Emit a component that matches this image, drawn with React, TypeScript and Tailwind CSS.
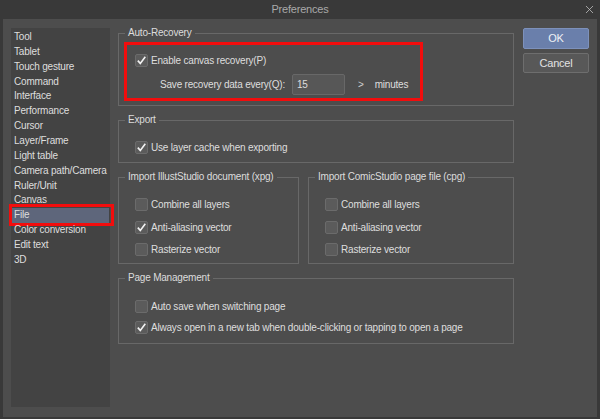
import { X } from "lucide-react";

const categories = [
  "Tool",
  "Tablet",
  "Touch gesture",
  "Command",
  "Interface",
  "Performance",
  "Cursor",
  "Layer/Frame",
  "Light table",
  "Camera path/Camera",
  "Ruler/Unit",
  "Canvas",
  "File",
  "Color conversion",
  "Edit text",
  "3D",
];

function Check({ checked }: { checked?: boolean }) {
  return (
    <span className="w-[13px] h-[13px] shrink-0 rounded-[2px] bg-[#5b5b5b] border border-[#6b6b6b] flex items-center justify-center">
      {checked && (
        <svg width="11" height="11" viewBox="0 0 11 11">
          <path d="M1.8 5.6 L4.3 8.4 L9.3 1.8" fill="none" stroke="#f2f2f2" strokeWidth="1.6" />
        </svg>
      )}
    </span>
  );
}

function Option({ label, checked }: { label: string; checked?: boolean }) {
  return (
    <label className="flex items-center gap-[3px] h-[13px] leading-[13px] whitespace-nowrap">
      <Check checked={checked} />
      <span>{label}</span>
    </label>
  );
}

function Group({
  title,
  className = "",
  children,
}: {
  title: string;
  className?: string;
  children: React.ReactNode;
}) {
  return (
    <fieldset className={`border border-[#686868] ${className}`}>
      <legend className="ml-[6px] px-[3px] leading-[12px] text-[#dcdcdc]">{title}</legend>
      {children}
    </fieldset>
  );
}

export default function App() {
  return (
    <div className="w-[600px] h-[419px] bg-[#393939] flex flex-col font-['Liberation_Sans',sans-serif] text-[10px] tracking-[-0.2px] text-[#dedede] overflow-hidden">
      {/* title bar */}
      <div className="h-[19px] shrink-0 relative flex items-center justify-center text-[#a9a9a9] text-[11px]">
        Preferences
        <X size={13} strokeWidth={1.5} className="absolute right-[4px] top-[3px] text-[#bdbdbd]" />
      </div>

      <div className="flex-1 mx-[3px] mb-[2px] bg-[#4d4d4d] flex items-start pl-[8px] pt-[8px]">
        {/* category list */}
        <div className="mt-[1px] w-[99px] h-[379px] shrink-0 bg-[#434343] pt-[2px]">
          {categories.map((c) => (
            <div
              key={c}
              className={`relative mx-[1px] h-[14.87px] leading-[14.87px] pl-[2px] whitespace-nowrap ${
                c === "File" ? "bg-[#5e667b]" : ""
              }`}
            >
              {c}
              {c === "File" && (
                <span className="absolute -left-[3px] -right-[5px] -top-[4px] -bottom-[3px] border-[3px] border-[#f20d0d]" />
              )}
            </div>
          ))}
        </div>

        {/* settings */}
        <div className="ml-[8px] w-[396px] flex flex-col gap-[8px]">
          <Group title="Auto-Recovery" className="pb-[4px]">
            <div className="mt-[3px] ml-[5px] w-[299px] border-[3px] border-[#f20d0d] pl-[8px] pt-[9px] pb-[3px]">
              <Option label="Enable canvas recovery(P)" checked />
              <div className="mt-[7px] flex items-center h-[21px] whitespace-nowrap">
                <span className="pl-[25px] w-[157px]">Save recovery data every(Q):</span>
                <span className="w-[53px] h-[21px] bg-[#575757] border border-[#686868] rounded-[2px] pl-[4px] leading-[19px]">
                  15
                </span>
                <span className="ml-[13px] text-[#cfcfcf]">&gt;</span>
                <span className="ml-[11px]">minutes</span>
              </div>
            </div>
          </Group>

          <Group title="Export" className="pb-[8px]">
            <div className="pl-[16px] pt-[15px]">
              <Option label="Use layer cache when exporting" checked />
            </div>
          </Group>

          <div className="flex gap-[9px]">
            <Group title="Import IllustStudio document (xpg)" className="w-[181px] pb-[7px]">
              <div className="pl-[16px] pt-[15px] flex flex-col gap-[9.5px]">
                <Option label="Combine all layers" />
                <Option label="Anti-aliasing vector" checked />
                <Option label="Rasterize vector" />
              </div>
            </Group>
            <Group title="Import ComicStudio page file (cpg)" className="flex-1 pb-[7px]">
              <div className="pl-[16px] pt-[15px] flex flex-col gap-[9.5px]">
                <Option label="Combine all layers" />
                <Option label="Anti-aliasing vector" />
                <Option label="Rasterize vector" />
              </div>
            </Group>
          </div>

          <Group title="Page Management" className="pb-[9px]">
            <div className="pl-[16px] pt-[16px] flex flex-col gap-[8px]">
              <Option label="Auto save when switching page" />
              <Option
                label="Always open in a new tab when double-clicking or tapping to open a page"
                checked
              />
            </div>
          </Group>
        </div>

        {/* buttons */}
        <div className="mt-[1px] ml-[9px] w-[66px] flex flex-col gap-[4px] text-[11px]">
          <button className="h-[21px] bg-[#6a7fab] border border-[#7d91bb] rounded-[2px] text-[#eef0f5]">
            OK
          </button>
          <button className="h-[20px] bg-[#585858] border border-[#6e6e6e] rounded-[2px] text-[#e2e2e2]">
            Cancel
          </button>
        </div>
      </div>
    </div>
  );
}
